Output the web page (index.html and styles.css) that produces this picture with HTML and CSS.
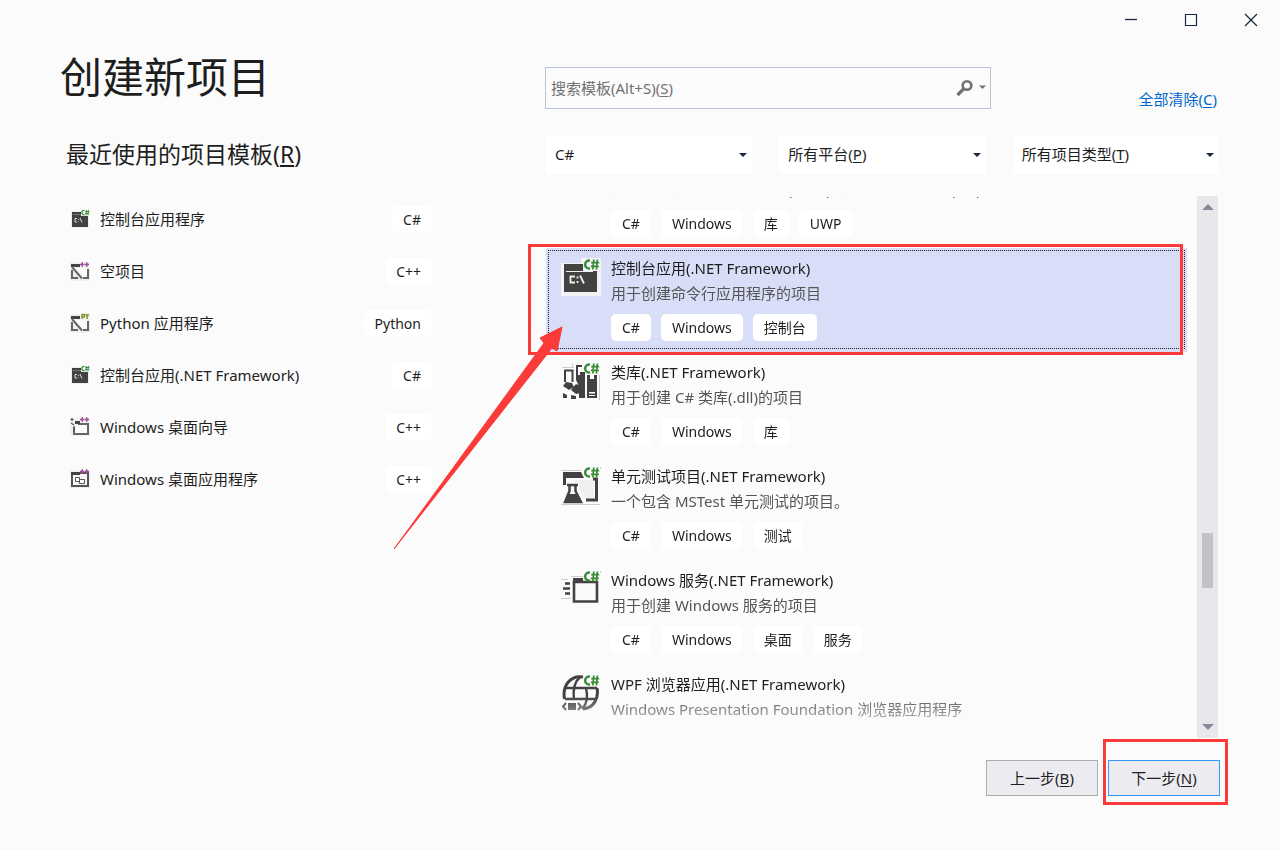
FILE: index.html
```html
<!DOCTYPE html>
<html lang="zh-CN">
<head>
<meta charset="utf-8">
<title>创建新项目</title>
<meta name="viewport" content="width=device-width, initial-scale=1">
<link rel="stylesheet" href="styles.css">
</head>
<body>
<svg class="defs" aria-hidden="true">
  <symbol id="cs" viewBox="0 0 18 13">
    <path d="M8 2.6A4 4 0 1 0 8 10.4" fill="none" stroke="#388a34" stroke-width="2.4"/>
    <path d="M11.8 1.5L10.8 11.5M15.4 1.5L14.4 11.5M9.2 4.7H17.2M8.8 8.3H16.8" fill="none" stroke="#388a34" stroke-width="1.7"/>
  </symbol>
  <symbol id="console" viewBox="0 0 20 20">
    <path d="M1 2H11V6H19V19H1Z" fill="#eee"/>
    <path d="M2 3H11V7H18V18H2Z" fill="#424242"/>
    <path d="M3 5.500H11" stroke="#777"/>
    <path d="M7 9.500H5V13H7M8.500 10V10.800M8.500 12.500V13M10 9L12 13.500" fill="none" stroke="#ddd"/>
    <use href="#cs" x="10" y="0" width="10" height="7"/>
  </symbol>
  <symbol id="plus" viewBox="0 0 10 5">
    <path d="M2.500 0V5M0 2.500H5M7.500 0V5M5.500 2.500H10" stroke="#9b4f96" stroke-width="1.700"/>
  </symbol>
  <symbol id="blank" viewBox="0 0 20 20">
    <path d="M0 1H20V20H0Z" fill="#f0f0f0"/>
    <path d="M4 7H17V16H12Z" fill="#fafafa"/>
    <path d="M1 3H10V6H1Z" fill="#424242"/>
    <path d="M2 9V17H8M2 6L12 17.500M13 17H18V8" fill="none" stroke="#666" stroke-width="2"/>
  </symbol>
</svg>

<header class="titlebar">
  <button type="button" aria-label="最小化"><svg viewBox="0 0 14 14"><path d="M1 6.500H13" stroke="#1b293e" stroke-width="1.300"/></svg></button>
  <button type="button" aria-label="最大化"><svg viewBox="0 0 14 14"><path d="M1.500 1.500H12.500V12.500H1.500Z" fill="none" stroke="#1b293e" stroke-width="1.200"/></svg></button>
  <button type="button" aria-label="关闭"><svg viewBox="0 0 14 14"><path d="M1 1L13 13M13 1L1 13" stroke="#1b293e" stroke-width="1.300"/></svg></button>
</header>

<main class="dialog">
  <section class="recent">
    <h1>创建新项目</h1>
    <h2>最近使用的项目模板(<u>R</u>)</h2>
    <ul class="recent-list">
      <li><svg class="small-icon" viewBox="0 0 20 20"><use href="#console"/></svg><span>控制台应用程序</span><span class="tag">C#</span></li>
      <li><svg class="small-icon" viewBox="0 0 20 20"><use href="#blank"/><use href="#plus" x="10" y="1" width="9" height="5"/></svg><span>空项目</span><span class="tag">C++</span></li>
      <li><svg class="small-icon" viewBox="0 0 20 20"><use href="#blank"/><path d="M12 6V1.500H14.500V4H12M16 1L17.200 3.500L18.500 1M17.200 3V6" fill="none" stroke="#879636" stroke-width="1.500"/></svg><span>Python 应用程序</span><span class="tag">Python</span></li>
      <li><svg class="small-icon" viewBox="0 0 20 20"><use href="#console"/></svg><span>控制台应用(.NET Framework)</span><span class="tag">C#</span></li>
      <li><svg class="small-icon" viewBox="0 0 20 20"><path d="M0 1H20V19H0Z" fill="#f0f0f0"/><path d="M4 10V17H18V7H8" fill="#fafafa" stroke="#666" stroke-width="2"/><path d="M5 4H10V7H5Z" fill="#424242"/><path d="M2 1V4M0.500 2.500H3.500M1 6L4 8M4 9V15" stroke="#555" stroke-width="1.200"/><use href="#plus" x="10" y="0" width="9" height="5"/></svg><span>Windows 桌面向导</span><span class="tag">C++</span></li>
      <li><svg class="small-icon" viewBox="0 0 20 20"><path d="M0 1H20V19H0Z" fill="#f0f0f0"/><path d="M2 4H18V17H2Z" fill="#f6f6f6" stroke="#555" stroke-width="2"/><path d="M1 3H10V6H1Z" fill="#424242"/><path d="M5.500 8.500H9.500V12.500H5.500ZM9.500 10.500H14.500V14.500H9.500Z" fill="#fff" stroke="#555"/><use href="#plus" x="10" y="0" width="9" height="5"/></svg><span>Windows 桌面应用程序</span><span class="tag">C++</span></li>
    </ul>
  </section>

  <section class="catalog">
    <div class="search-row">
      <div class="search">
        <input id="search" type="text">
        <label for="search">搜索模板(Alt+S)(<u>S</u>)</label>
        <svg viewBox="0 0 32 18"><circle cx="11" cy="6.500" r="4.300" fill="none" stroke="#717171" stroke-width="2.600"/><path d="M8 9.500L1.500 16" stroke="#717171" stroke-width="3.200"/><path d="M23 6.500H30L26.500 10Z" fill="#717171"/></svg>
      </div>
      <a class="clear" href="#">全部清除(<u>C</u>)</a>
    </div>

    <div class="filters">
      <div class="filter"><select id="language" aria-label="语言"><option>C#</option></select><svg viewBox="0 0 8 4"><path d="M0 0H8L4 4Z" fill="#1b293e"/></svg></div>
      <div class="filter"><select id="platform"><option></option></select><label for="platform">所有平台(<u>P</u>)</label><svg viewBox="0 0 8 4"><path d="M0 0H8L4 4Z" fill="#1b293e"/></svg></div>
      <div class="filter"><select id="kind"><option></option></select><label for="kind">所有项目类型(<u>T</u>)</label><svg viewBox="0 0 8 4"><path d="M0 0H8L4 4Z" fill="#1b293e"/></svg></div>
    </div>

    <div class="results">
      <div class="viewport">
        <ul class="templates">
          <li class="template scrolled">
            <span class="icon"></span>
            <div class="info">
              <p>用于为通用 Windows 平台(UWP)应用创建托管类库(.dll)的项目。</p>
              <div class="tags"><span class="tag">C#</span><span class="tag">Windows</span><span class="tag">库</span><span class="tag">UWP</span></div>
            </div>
          </li>
          <li class="template selected">
            <svg class="icon" viewBox="0 0 40 40">
              <path d="M0 5H20V0H40V38H0Z" fill="#f3f3f5"/>
              <path d="M3 6H22V13H36V34H3Z" fill="#424242"/>
              <path d="M5 13.500H32" stroke="#f0f0f0"/>
              <path d="M14 18.500H9.500V24.500H14M16.500 18.500V20.500M16.500 23V25M19 17.500L23 25.500" fill="none" stroke="#f0f0f0" stroke-width="1.800"/>
              <use href="#cs" x="21" y="0" width="18" height="13"/>
            </svg>
            <div class="info">
              <h3>控制台应用(.NET Framework)</h3>
              <p>用于创建命令行应用程序的项目</p>
              <div class="tags"><span class="tag">C#</span><span class="tag">Windows</span><span class="tag">控制台</span></div>
            </div>
          </li>
          <li class="template">
            <svg class="icon" viewBox="0 0 40 40">
              <path d="M38.500 13V38M11.500 1V5M1 5.500H13" stroke="#ccc"/>
              <path d="M4 20V8.500H11.500V20" fill="none" stroke="#424242" stroke-width="2"/>
              <path d="M15 3H21V5H17V13H22V36H18V24L15 18Z" fill="#424242"/>
              <path d="M19 10H24V36H19ZM26 13H36V36H26Z" fill="#424242"/>
              <path d="M29 13H33V17H29ZM28 30H34V31.500H28ZM28 33H34V34H28Z" fill="#fff"/>
              <path d="M5 20L11 21L13 25L8 28L2 24ZM15 22L20 24V31L15 32L10 28ZM2 31L6 33V36H2ZM10 33L15 34V37H10Z" fill="#424242"/>
              <use href="#cs" x="21" y="0" width="18" height="13"/>
            </svg>
            <div class="info">
              <h3>类库(.NET Framework)</h3>
              <p>用于创建 C# 类库(.dll)的项目</p>
              <div class="tags"><span class="tag">C#</span><span class="tag">Windows</span><span class="tag">库</span></div>
            </div>
          </li>
          <li class="template">
            <svg class="icon" viewBox="0 0 40 40">
              <path d="M0 4.500H20M0 38.500H39M39.500 1V3" stroke="#ccc"/>
              <path d="M13 14H33V34H24L18 23V17H13Z" fill="#f0f0f0"/>
              <path d="M2 6H20L23 12H5V19H2Z" fill="#424242"/>
              <path d="M32 13H35.500V34H25" fill="none" stroke="#424242" stroke-width="3"/>
              <path d="M6 19H17M8.500 19V25L4 36H20L14.500 25V19" fill="#fafafa" stroke="#424242" stroke-width="2.500"/>
              <path d="M8 28H15L19 36H5Z" fill="#424242"/>
              <use href="#cs" x="21" y="0" width="18" height="13"/>
            </svg>
            <div class="info">
              <h3>单元测试项目(.NET Framework)</h3>
              <p>一个包含 MSTest 单元测试的项目。</p>
              <div class="tags"><span class="tag">C#</span><span class="tag">Windows</span><span class="tag">测试</span></div>
            </div>
          </li>
          <li class="template">
            <svg class="icon" viewBox="0 0 40 40">
              <path d="M10 6.500H22M0 9.500H7M0 28.500H10M39.500 1V3" stroke="#ccc"/>
              <path d="M13 12H36V31.500H13Z" fill="#fafafa" stroke="#424242" stroke-width="2.600"/>
              <path d="M12 8H22V13H12Z" fill="#424242"/>
              <path d="M4 13.500H9M2 18.500H9M4 23.500H9" stroke="#424242" stroke-width="2.400"/>
              <use href="#cs" x="21" y="0" width="18" height="13"/>
            </svg>
            <div class="info">
              <h3>Windows 服务(.NET Framework)</h3>
              <p>用于创建 Windows 服务的项目</p>
              <div class="tags"><span class="tag">C#</span><span class="tag">Windows</span><span class="tag">桌面</span><span class="tag">服务</span></div>
            </div>
          </li>
          <li class="template">
            <svg class="icon" viewBox="0 0 40 40">
              <g fill="none" stroke="#424242" stroke-width="3">
                <path d="M22 3C10 1 1 11 3.500 25M36 14C38 24 33 34 22 35"/>
                <path d="M19 3C12 9 12 18 13 26M25 14C27 22 26 30 21 35M4 14H36M4 25H35" stroke-width="2.400"/>
              </g>
              <path d="M7 29H15V36H7Z" fill="#424242"/>
              <path d="M5 29L2 32.500L5 36M17 29L20 32.500L17 36" fill="none" stroke="#424242" stroke-width="2"/>
              <use href="#cs" x="21" y="0" width="18" height="13"/>
            </svg>
            <div class="info">
              <h3>WPF 浏览器应用(.NET Framework)</h3>
              <p>Windows Presentation Foundation 浏览器应用程序</p>
            </div>
          </li>
        </ul>
      </div>
      <div class="scrollbar">
        <button type="button" aria-label="向上滚动"><svg viewBox="0 0 12 6"><path d="M0 6L6 0L12 6Z" fill="#868999"/></svg></button>
        <div class="track"><div class="thumb"></div></div>
        <button type="button" aria-label="向下滚动"><svg viewBox="0 0 12 6"><path d="M0 0H12L6 6Z" fill="#868999"/></svg></button>
      </div>
      <div class="mark mark-item"></div>
      <svg class="arrow" viewBox="0 0 170 224" aria-hidden="true"><path d="M0 223L150 17L146 12L168 1L163 25L158 22Z" fill="#fb3a3a" stroke="#fb3a3a"/></svg>
    </div>

    <footer class="actions">
      <button type="button">上一步(<u>B</u>)</button>
      <div class="next"><button type="button" class="primary">下一步(<u>N</u>)</button><div class="mark mark-next"></div></div>
    </footer>
  </section>
</main>
</body>
</html>
```
FILE: styles.css
```css
* { box-sizing: border-box; }
body {
  margin: 0;
  min-height: 100vh;
  display: flex;
  flex-direction: column;
  background: #fbfbfb;
  color: #1e1e1e;
  font: 15px/20px "Noto Sans", "Noto Sans CJK SC", sans-serif;
}
h1, h2, h3, p, ul { margin: 0; padding: 0; font-weight: 400; }
h3 { font-size: 15px; }
ul { list-style: none; }
button, input, select { font: inherit; color: inherit; }
u { text-underline-offset: 2px; }
.defs { position: absolute; width: 0; height: 0; }

.titlebar { display: flex; justify-content: flex-end; height: 40px; }
.titlebar button {
  width: 60px;
  border: 0;
  padding: 0 0 0 2px;
  background: none;
  display: grid;
  place-items: center;
}
.titlebar svg { width: 14px; height: 14px; }

.dialog {
  flex: 1;
  display: grid;
  grid-template-columns: 372px 1fr;
  column-gap: 113px;
  padding: 0 61px 54px 60px;
}

.recent h1 { font-size: 42px; line-height: 60px; margin-top: 7px; }
.recent h2 { font-size: 23px; line-height: 32px; margin: 31px 0 0 6px; }
.recent-list { margin: 23px 0 0 10px; }
.recent-list li { display: flex; align-items: center; gap: 10px; height: 52px; }
.recent-list .tag { margin-left: auto; }
.small-icon { width: 20px; height: 20px; }

.tag {
  display: inline-block;
  padding: 1px 11px 0;
  border-radius: 5px;
  background: #fff;
  font-size: 14px;
  line-height: 26px;
}

.catalog { display: flex; flex-direction: column; padding-top: 27px; }
.search-row { display: flex; justify-content: space-between; align-items: flex-end; }
.search { position: relative; width: 446px; height: 42px; }
.search input {
  width: 100%;
  height: 100%;
  border: 1px solid #b9c3d6;
  background: #fcfcfc;
  padding: 0 40px 0 5px;
}
.search label { position: absolute; left: 6px; top: 11px; color: #717171; pointer-events: none; }
.search svg { position: absolute; right: 3px; top: 12px; width: 32px; height: 18px; }
.clear { color: #0066cc; text-decoration: none; margin-right: 2px; }

.filters { display: grid; grid-template-columns: repeat(3, 1fr); gap: 27px; margin: 26px 0 0 1px; }
.filter { position: relative; height: 39px; }
.filter select {
  appearance: none;
  width: 100%;
  height: 100%;
  border: 0;
  border-radius: 0;
  padding: 0 9px 2px;
  background: #fff;
}
.filter label { position: absolute; left: 9px; top: 9px; pointer-events: none; }
.filter svg { position: absolute; right: 5px; top: 18px; width: 8px; height: 4px; pointer-events: none; }

.results { position: relative; display: flex; gap: 10px; margin: 22px 1px 0 1px; height: 542px; }
.viewport {
  flex: 1;
  overflow: hidden;
  -webkit-mask-image: linear-gradient(transparent 1px, #000 1px, #000 500px, transparent 545px);
  mask-image: linear-gradient(transparent 1px, #000 1px, #000 500px, transparent 545px);
}
.templates { margin-top: -32px; }
.template { position: relative; display: flex; gap: 10px; height: 104px; padding: 10px 15px; }
.template.scrolled { height: 84px; }
.template .icon { width: 40px; height: 40px; flex: none; }
.template p { color: #555; margin-top: 5px; }
.tags { display: flex; gap: 10px; margin-top: 11px; }
.selected { background: #d9def8; }
.selected::after {
  content: "";
  position: absolute;
  inset: 2px 2px 3px;
  border: 1px dotted #1e1e1e;
}

.scrollbar { display: flex; flex-direction: column; width: 21px; background: #e8e8ec; }
.scrollbar button { height: 22px; border: 0; padding: 0; background: none; display: grid; place-items: center; }
.scrollbar svg { width: 12px; height: 6px; }
.track { flex: 1; padding: 315px 5px 0; }
.thumb { height: 55px; background: #c2c3c9; }

.mark { position: absolute; border: 3px solid #fb3a3a; pointer-events: none; }
.mark-item { left: -18px; right: 35px; top: 48px; height: 111px; }
.arrow { position: absolute; left: -152px; top: 130px; width: 170px; height: 224px; pointer-events: none; }

.actions { display: flex; justify-content: flex-end; gap: 10px; margin: 22px -1px 0 0; }
.actions button { width: 112px; height: 36px; padding: 0; border: 1px solid #acacac; background: #ececf0; }
.actions .primary { border-color: #3399ff; }
.next { position: relative; }
.mark-next { inset: -21px -8px -9px -5px; }
```
